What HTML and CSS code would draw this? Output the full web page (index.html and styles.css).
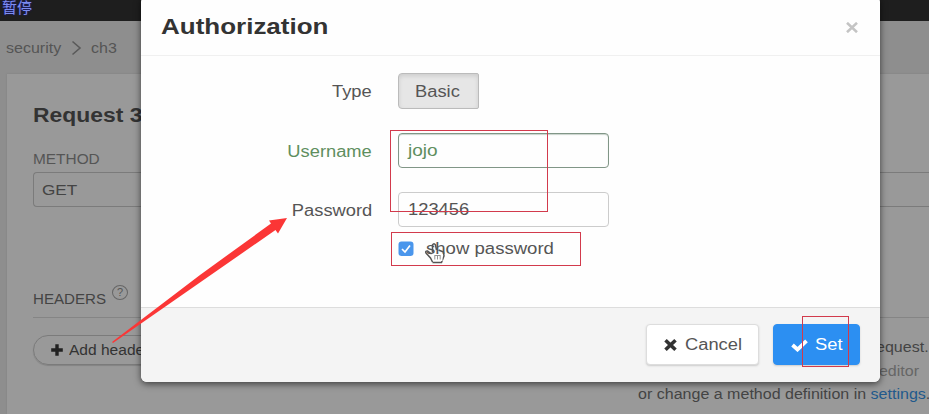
FILE: index.html
```html
<!DOCTYPE html>
<html>
<head>
	<title>Authorization</title>
	<meta charset="utf-8">
	<link rel="stylesheet" href="styles.css">
</head>
<body>
	<div class="topbar"><span class="pause">暂停</span></div>
	<div class="crumbs">
		<span class="t crumb">security</span>
		<svg width="11" height="16" viewBox="0 0 11 16"><path d="M1.5 1.5L9 8L1.5 14.5" fill="none" stroke="#5a5a5a" stroke-width="1.6"/></svg>
		<span class="t">ch3</span>
	</div>
	<div class="card">
		<h2><span class="t">Request 3</span></h2>
		<div class="field-name"><span class="t method">METHOD</span></div>
		<div class="select"><span class="t">GET</span></div>
		<div class="headers">
			<span class="t headers-name">HEADERS</span>
			<span class="help">?</span>
		</div>
		<div class="row">
			<div class="add">
				<svg width="12" height="12" viewBox="0 0 12 12"><path d="M6 0.2V11.8M0.2 6H11.8" stroke="#222" stroke-width="3.4"/></svg>
				<span class="t add-text">Add header</span>
			</div>
			<div class="notes">
				<p class="first"><span class="t right">request.</span></p>
				<p class="muted"><span class="t right">editor</span></p>
				<p><span class="t">or change a method definition in <a href="#">settings</a>.</span></p>
			</div>
		</div>
	</div>

	<div class="modal">
		<div class="modal-header">
			<h1><span class="t">Authorization</span></h1>
			<svg class="close" width="12" height="11" viewBox="0 0 12 11"><path d="M1 0.8L11 10.2M11 0.8L1 10.2" stroke="#c4c4c4" stroke-width="2.6"/></svg>
		</div>
		<div class="modal-body">
			<label><span class="t right">Type</span></label>
			<div class="basic"><span class="t">Basic</span></div>
			<label class="ok"><span class="t right">Username</span></label>
			<div class="input input-ok"><span class="t jojo">jojo</span></div>
			<label><span class="t right">Password</span></label>
			<div class="input"><span class="t">123456</span></div>
			<div class="show">
				<svg width="16" height="16" viewBox="0 0 16 16"><rect x="0.5" y="0.5" width="15" height="14.5" rx="3" fill="#4a96ec"/><path d="M4 8L7 11L12 4.5" fill="none" stroke="#fff" stroke-width="1.7"/></svg>
				<span class="t">show password</span>
			</div>
		</div>
		<div class="modal-footer">
			<div class="btn">
				<svg width="13" height="12" viewBox="0 0 13 12"><path d="M1.5 1.3L11.5 10.7M11.5 1.3L1.5 10.7" stroke="#333" stroke-width="3.6"/></svg>
				<span class="t">Cancel</span>
			</div>
			<div class="btn set">
				<svg width="17" height="13" viewBox="0 0 17 13"><path d="M1.5 6L6.5 10.5L15.5 1.8" fill="none" stroke="#fff" stroke-width="3.8"/></svg>
				<span class="t">Set</span>
			</div>
		</div>
	</div>

	<!-- arrow, red frames and the pointer lie over everything -->
	<svg class="marks" width="929" height="414" viewBox="0 0 929 414">
		<path d="M112 342L200 275L271 223.5L269 220.5L287 218L278 233.5L275.5 230L205 279L113 343Z" fill="#fb3636"/>
		<g fill="none" stroke="#d23a4c">
			<rect x="390.5" y="130.5" width="157" height="81"/>
			<rect x="391.5" y="232.5" width="189" height="33"/>
			<rect x="802.5" y="316.5" width="46" height="50"/>
		</g>
		<path d="M432.5 262L430.5 258L426 253Q425 250.8 427.5 251L431.5 254M432.5 252.5V245Q434 242.5 435.5 245L436.5 250M438.5 250L441 251L443.5 252L444 256L441.5 262.5H432.5" fill="none" stroke="#555" stroke-width="1.5"/>
		<path d="M433 254H442.5V261H433Z" fill="#fff"/>
		<path d="M434.8 259.5V255.5M437.5 259.5V255.5M440.2 259.5V255.5M434.5 255.5H440.5" stroke="#888" stroke-width="0.9"/>
	</svg>
</body>
</html>
```

FILE: styles.css
```css
*{
	margin: 0;
	padding: 0;
	box-sizing: border-box;
}
body{
	width: 929px;
	height: 414px;
	overflow: hidden;
	position: relative;
	background: #8e8e8e;
	color: #444;
	font: 14px/20px "Liberation Sans", "Noto Sans CJK SC", sans-serif;
}
svg{
	display: block;
	flex: none;
}
/* wide lettering */
.t{
	display: inline-block;
	white-space: nowrap;
	transform: scaleX(1.145);
	transform-origin: 0 50%;
}
.right{
	transform-origin: 100% 50%;
}
.topbar{
	height: 21px;
	background: #1e1e1e;
}
.pause{
	display: block;
	padding-left: 2px;
	font: 15px/13px "Noto Sans CJK SC", sans-serif;
	color: #7d8df0;
	text-shadow: 0 0 2px #1818a0;
}
.crumbs{
	height: 53px;
	padding-left: 6px;
	display: flex;
	align-items: center;
	color: #555;
}
.crumb{
	width: 65px;
}
.crumbs svg{
	margin-right: 9px;
}
.card{
	height: 340px;
	margin-left: 7px;
	padding: 29px 0 0 26px;
	background: #999;
	box-shadow: 0 0 2px #808080;
}
h2{
	font-size: 20px;
	line-height: 24px;
	color: #333;
}
.field-name{
	margin-top: 22px;
	color: #555;
}
.method{
	transform: scaleX(1.1);
}
.select{
	height: 35px;
	margin-top: 3px;
	padding-left: 8px;
	border: 1px solid #7b7b7b;
	border-right: 0;
	border-radius: 4px 0 0 4px;
	font-size: 15px;
	line-height: 34px;
}
.headers{
	height: 33px;
	margin-top: 78px;
	display: flex;
	border-bottom: 1px solid #858585;
}
.headers-name{
	width: 79px;
	padding-top: 4px;
	transform: scaleX(1.08);
}
.help{
	width: 16px;
	height: 15px;
	border: 1px solid #666;
	border-radius: 50%;
	color: #555;
	font-size: 11px;
	line-height: 13px;
	text-align: center;
}
.row{
	display: flex;
	padding-top: 17px;
}
.add{
	width: 150px;
	height: 30px;
	padding-left: 17px;
	display: flex;
	align-items: center;
	gap: 6px;
	border: 1px solid #7b7b7b;
	border-radius: 15px;
	box-shadow: 0 1px 1px #838383;
	color: #333;
}
.add-text{
	transform: scaleX(1.11);
}
.notes{
	width: 291px;
	margin-left: 455px;
	padding-top: 1px;
	line-height: 23.5px;
}
.notes p{
	height: 23.5px;
}
.first, .muted{
	text-align: right;
}
.notes .muted{
	padding-right: 10px;
	color: #666;
}
.notes a{
	color: #22598c;
	text-decoration: none;
}

.modal{
	position: absolute;
	left: 141px;
	top: -4px;
	width: 739px;
	height: 386px;
	display: flex;
	flex-direction: column;
	overflow: hidden;
	background: #fefefe;
	border-radius: 6px;
	box-shadow: 0 2px 7px rgba(0,0,0,.6);
	font-size: 16px;
	color: #555;
}
.modal-header{
	height: 60px;
	padding: 3px 22px 0 20px;
	display: flex;
	align-items: center;
	justify-content: space-between;
	border-bottom: 1px solid #f0f0f0;
}
h1{
	font-size: 22.5px;
	line-height: 26px;
	color: #333;
}
h1 .t{
	transform: scaleX(1.155);
}
.modal-body{
	flex: 1;
	padding: 17px 0 0;
	display: grid;
	grid-template-columns: 231px 211px;
	grid-template-rows: 36px 36px 36px 24px;
	row-gap: 23.5px;
	column-gap: 26px;
}
label{
	text-align: right;
	line-height: 37px;
}
.ok{
	color: #5e8f5e;
}
.basic{
	width: 81px;
	padding-left: 16px;
	line-height: 35px;
	background: #e6e6e6;
	border: 1px solid #bbb;
	border-radius: 4px 2px 2px 4px;
	box-shadow: inset 0 2px 4px #ccc;
}
.input{
	height: 35px;
	padding-left: 9px;
	line-height: 34px;
	border: 1px solid #ccc;
	border-radius: 4px;
}
.input-ok{
	color: #5e8f5e;
	border-color: #819687;
	box-shadow: inset 0 1px 1px #c9d3cc;
}
.jojo{
	transform: scaleX(1.19);
}
.show{
	grid-column: 2;
	margin-top: -15px;
	display: flex;
	align-items: center;
	gap: 12px;
	height: 24px;
}
.show .t{
	transform: scaleX(1.16);
}
.modal-footer{
	height: 75px;
	padding: 16px 20px 0 0;
	display: flex;
	justify-content: flex-end;
	gap: 14px;
	background: #f4f4f4;
	border-top: 1px solid #ddd;
}
.btn{
	width: 113px;
	height: 41px;
	padding: 1px 0 0 17px;
	display: flex;
	align-items: center;
	gap: 8px;
	background: #fff;
	border: 1px solid #ddd;
	border-radius: 4px;
	box-shadow: 0 1px 2px #ccc;
}
.set{
	width: 87px;
	gap: 7px;
	background: #2c8ff2;
	border-color: #2c8ff2;
	color: #fff;
}
.marks{
	position: absolute;
	left: 0;
	top: 0;
}
```
